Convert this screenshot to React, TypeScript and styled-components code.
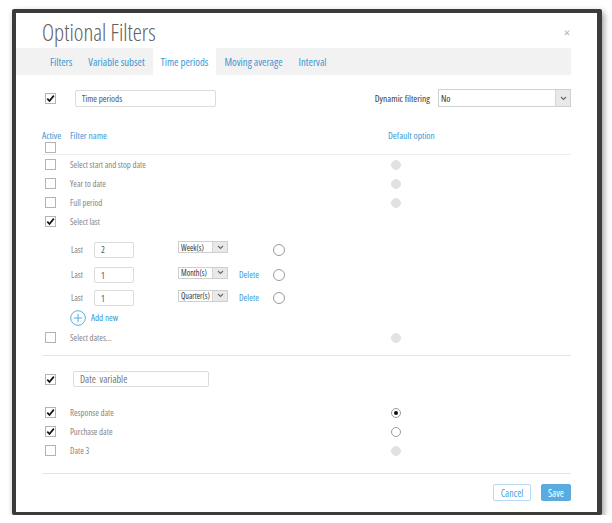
import React from 'react'
import styled, { createGlobalStyle } from 'styled-components'

const GlobalStyle = createGlobalStyle`
  html, body {
    margin: 0;
    background: #fff;
  }
  body {
    font-family: "Open Sans", "Liberation Sans", sans-serif;
    font-stretch: 75%;
    color: #7a7a7a;
  }
`

const Page = styled.div`
  padding: 9px 0 0 12px;
`

const Frame = styled.div`
  width: 590px;
  height: 506px;
  box-sizing: border-box;
  border: 4px solid #3b3b3b;
  border-right-width: 5px;
  border-bottom-width: 3px;
  border-radius: 2px;
  box-shadow: 2px 3px 6px rgba(0, 0, 0, 0.4);
  background: #fff;
  display: flex;
  flex-direction: column;
`

const Header = styled.div`
  height: 35px;
  box-sizing: border-box;
  padding: 3px 26px 0;
  display: flex;
  align-items: center;
  justify-content: space-between;
`

const Title = styled.h1`
  margin: 0;
  font-size: 23px;
  font-weight: 300;
  color: #606060;
`

const Close = styled.span`
  font-size: 14px;
  color: #b5b5b5;
  margin-right: 1px;
`

const TabBar = styled.div`
  height: 27px;
  margin-right: 26px;
  padding-left: 26px;
  background: #f2f2f2;
  display: flex;
`

const Tab = styled.div<{ $active?: boolean }>`
  padding: 0 8px;
  display: flex;
  align-items: center;
  font-size: 10.7px;
  color: #3b97d3;
  background: ${(p) => (p.$active ? '#fff' : 'transparent')};
`

const Body = styled.div`
  flex: 1;
  padding: 0 26px;
  display: flex;
  flex-direction: column;
`

const TopRow = styled.div`
  margin-top: 14px;
  height: 18px;
  display: flex;
  align-items: center;
`

const Box = styled.span`
  width: 11px;
  height: 11px;
  box-sizing: border-box;
  margin-left: 3px;
  border: 1px solid #b4b4b4;
  background: #fff;
  display: inline-flex;
  align-items: center;
  justify-content: center;
  flex-shrink: 0;
`

const TextInput = styled.div<{ $width: number; $height: number; $size?: number; $color?: string }>`
  width: ${(p) => p.$width}px;
  height: ${(p) => p.$height}px;
  box-sizing: border-box;
  border: 1px solid #dcdcdc;
  border-radius: 2px;
  padding-left: 6px;
  display: flex;
  align-items: center;
  font-size: ${(p) => p.$size ?? 9}px;
  color: ${(p) => p.$color ?? '#555'};
`

const Spacer = styled.div`
  flex: 1;
`

const FieldLabel = styled.span`
  font-size: 9.5px;
  color: #3a3a3a;
  margin-right: 8px;
`

const SelectBox = styled.div<{ $width: number; $height: number }>`
  width: ${(p) => p.$width}px;
  height: ${(p) => p.$height}px;
  box-sizing: border-box;
  border: 1px solid #cfcfcf;
  display: flex;
  align-items: stretch;
  background: #fff;
`

const SelectValue = styled.span<{ $size: number }>`
  flex: 1;
  padding-left: 2px;
  display: flex;
  align-items: center;
  font-size: ${(p) => p.$size}px;
  color: #333;
  overflow: hidden;
  white-space: nowrap;
`

const SelectArrow = styled.span`
  width: 14px;
  background: #e9e9e9;
  border-left: 1px solid #d4d4d4;
  display: flex;
  align-items: center;
  justify-content: center;
`

const Grid = styled.div`
  display: grid;
  grid-template-columns: 28px 318px 1fr;
  align-items: center;
`

const HeaderGrid = styled(Grid)`
  margin-top: 23px;
  padding-bottom: 1px;
  border-bottom: 1px solid #ececec;
  row-gap: 1px;
  align-items: start;
`

const ColTitle = styled.span`
  font-size: 9.5px;
  line-height: 11px;
  color: #3b97d3;
`

const Row = styled(Grid)`
  height: 19px;
`

const RowText = styled.span`
  font-size: 8.75px;
  color: #858585;
`

const Radio = styled.span<{ $state: 'disabled' | 'empty' | 'checked'; $size?: number }>`
  width: ${(p) => p.$size ?? 10}px;
  height: ${(p) => p.$size ?? 10}px;
  margin-left: 3px;
  box-sizing: border-box;
  border-radius: 50%;
  border: 1px solid ${(p) => (p.$state === 'disabled' ? '#e2e2e2' : '#9a9a9a')};
  background: ${(p) => (p.$state === 'disabled' ? '#e2e2e2' : '#fff')};
  display: flex;
  align-items: center;
  justify-content: center;
  &::after {
    content: '';
    width: 4px;
    height: 4px;
    border-radius: 50%;
    background: ${(p) => (p.$state === 'checked' ? '#111' : 'transparent')};
  }
`

const SubBlock = styled.div`
  margin-top: 7px;
  padding-left: 29px;
`

const SubRow = styled.div`
  height: 23px;
  display: grid;
  grid-template-columns: 23px 84px 61px 34px 12px;
  align-items: center;
`

const SmallSelect = styled(SelectBox)`
  margin-bottom: 5px;
`

const LinkText = styled.span`
  font-size: 9px;
  color: #3b97d3;
`

const DeleteCell = styled.span`
  margin-bottom: 6px;
`

const AddRow = styled.div`
  height: 21px;
  display: flex;
  align-items: center;
  gap: 5px;
  margin-left: -1px;
`

const Divider = styled.div<{ $top: number }>`
  margin-top: ${(p) => p.$top}px;
  height: 1px;
  background: #d5e9f7;
`

const DateRow = styled.div`
  margin-top: 15px;
  height: 16px;
  display: flex;
  align-items: center;
  gap: 17px;
`

const DateList = styled.div`
  margin-top: 16px;
`

const Footer = styled.div`
  margin-top: 10px;
  display: flex;
  justify-content: flex-end;
  gap: 10px;
`

const Button = styled.div<{ $primary?: boolean; $width: number }>`
  width: ${(p) => p.$width}px;
  height: 17px;
  box-sizing: border-box;
  border-radius: 2px;
  border: 1px solid ${(p) => (p.$primary ? '#5aace0' : '#b9dcf2')};
  background: ${(p) => (p.$primary ? '#5aace0' : '#fff')};
  color: ${(p) => (p.$primary ? '#fff' : '#4aa2dc')};
  font-size: 10px;
  display: flex;
  align-items: center;
  justify-content: center;
`

const Check = () => (
  <svg width="9" height="9" viewBox="0 0 9 9">
    <path d="M1.3 4.6 L3.5 7 L7.8 1.6" fill="none" stroke="#111" strokeWidth="1.7" />
  </svg>
)

const Chevron = () => (
  <svg width="7" height="5" viewBox="0 0 7 5">
    <path d="M1 1 L3.5 3.5 L6 1" fill="none" stroke="#666" strokeWidth="1.1" />
  </svg>
)

const Checkbox = ({ checked }: { checked?: boolean }) => <Box>{checked && <Check />}</Box>

const periods = [
  { name: 'Select start and stop date', checked: false },
  { name: 'Year to date', checked: false },
  { name: 'Full period', checked: false },
]

const lastRows = [
  { value: '2', unit: 'Week(s)', del: false },
  { value: '1', unit: 'Month(s)', del: true },
  { value: '1', unit: 'Quarter(s)', del: true },
]

const dates: { name: string; checked: boolean; radio: 'disabled' | 'empty' | 'checked' }[] = [
  { name: 'Response date', checked: true, radio: 'checked' },
  { name: 'Purchase date', checked: true, radio: 'empty' },
  { name: 'Date 3', checked: false, radio: 'disabled' },
]

const tabs = ['Filters', 'Variable subset', 'Time periods', 'Moving average', 'Interval']

export default function App() {
  return (
    <>
      <GlobalStyle />
      <Page>
        <Frame>
          <Header>
            <Title>Optional Filters</Title>
            <Close>×</Close>
          </Header>
          <TabBar>
            {tabs.map((t) => (
              <Tab key={t} $active={t === 'Time periods'}>
                {t}
              </Tab>
            ))}
          </TabBar>
          <Body>
            <TopRow>
              <Checkbox checked />
              <TextInput $width={141} $height={17} style={{ marginLeft: 19 }}>
                Time periods
              </TextInput>
              <Spacer />
              <FieldLabel>Dynamic filtering</FieldLabel>
              <SelectBox $width={133} $height={18}>
                <SelectValue $size={9.5}>No</SelectValue>
                <SelectArrow>
                  <Chevron />
                </SelectArrow>
              </SelectBox>
            </TopRow>

            <HeaderGrid>
              <ColTitle>Active</ColTitle>
              <ColTitle>Filter name</ColTitle>
              <ColTitle>Default option</ColTitle>
              <Checkbox />
            </HeaderGrid>

            {periods.map((p) => (
              <Row key={p.name}>
                <Checkbox checked={p.checked} />
                <RowText>{p.name}</RowText>
                <Radio $state="disabled" />
              </Row>
            ))}
            <Row>
              <Checkbox checked />
              <RowText>Select last</RowText>
            </Row>

            <SubBlock>
              {lastRows.map((r, i) => (
                <SubRow key={i}>
                  <RowText>Last</RowText>
                  <TextInput $width={40} $height={16}>
                    {r.value}
                  </TextInput>
                  <SmallSelect $width={50} $height={12}>
                    <SelectValue $size={8}>{r.unit}</SelectValue>
                    <SelectArrow>
                      <Chevron />
                    </SelectArrow>
                  </SmallSelect>
                  <DeleteCell>{r.del && <LinkText>Delete</LinkText>}</DeleteCell>
                  <Radio $state="empty" $size={12} style={{ marginLeft: 0 }} />
                </SubRow>
              ))}
              <AddRow>
                <svg width="16" height="16" viewBox="0 0 16 16">
                  <circle cx="8" cy="8" r="7.3" fill="none" stroke="#5aaee0" strokeWidth="1" />
                  <path d="M8 3.8 V12.2 M3.8 8 H12.2" stroke="#5aaee0" strokeWidth="1" />
                </svg>
                <LinkText>Add new</LinkText>
              </AddRow>
            </SubBlock>
            <Row>
              <Checkbox />
              <RowText>Select dates...</RowText>
              <Radio $state="disabled" />
            </Row>

            <Divider $top={8} />

            <DateRow>
              <Checkbox checked />
              <TextInput $width={136} $height={16} $size={10} $color="#777">
                Date&nbsp; variable
              </TextInput>
            </DateRow>

            <DateList>
              {dates.map((d) => (
                <Row key={d.name}>
                  <Checkbox checked={d.checked} />
                  <RowText>{d.name}</RowText>
                  <Radio $state={d.radio} />
                </Row>
              ))}
            </DateList>

            <Divider $top={13} />

            <Footer>
              <Button $width={38}>Cancel</Button>
              <Button $primary $width={30}>
                Save
              </Button>
            </Footer>
          </Body>
        </Frame>
      </Page>
    </>
  )
}
